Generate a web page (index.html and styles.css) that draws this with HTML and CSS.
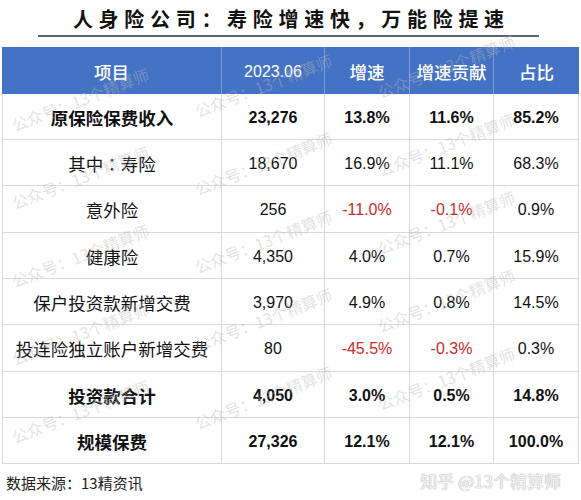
FILE: index.html
```html
<!DOCTYPE html>
<html lang="zh-CN">
<head>
<meta charset="utf-8">
<title>人身险公司：寿险增速快，万能险提速</title>
<link rel="stylesheet" href="styles.css">
</head>
<body>
<div class="page">
  <h1 class="title">人身险公司<span class="colon">：</span>寿险增速快，万能险提速</h1>

  <div class="sheet">
    <div class="cell head lbl">项目</div>
    <div class="cell head num">2023.06</div>
    <div class="cell head lbl">增速</div>
    <div class="cell head lbl">增速贡献</div>
    <div class="cell head lbl">占比</div>

    <div class="cell first lbl bold">原保险保费收入</div>
    <div class="cell num bold">23,276</div>
    <div class="cell num bold">13.8%</div>
    <div class="cell num bold">11.6%</div>
    <div class="cell num bold">85.2%</div>

    <div class="cell first lbl">其中<span class="colon">：</span>寿险</div>
    <div class="cell num">18,670</div>
    <div class="cell num">16.9%</div>
    <div class="cell num">11.1%</div>
    <div class="cell num">68.3%</div>

    <div class="cell first lbl">意外险</div>
    <div class="cell num">256</div>
    <div class="cell num neg">-11.0%</div>
    <div class="cell num neg">-0.1%</div>
    <div class="cell num">0.9%</div>

    <div class="cell first lbl">健康险</div>
    <div class="cell num">4,350</div>
    <div class="cell num">4.0%</div>
    <div class="cell num">0.7%</div>
    <div class="cell num">15.9%</div>

    <div class="cell first lbl">保户投资款新增交费</div>
    <div class="cell num">3,970</div>
    <div class="cell num">4.9%</div>
    <div class="cell num">0.8%</div>
    <div class="cell num">14.5%</div>

    <div class="cell first lbl">投连险独立账户新增交费</div>
    <div class="cell num">80</div>
    <div class="cell num neg">-45.5%</div>
    <div class="cell num neg">-0.3%</div>
    <div class="cell num">0.3%</div>

    <div class="cell first lbl bold">投资款合计</div>
    <div class="cell num bold">4,050</div>
    <div class="cell num bold">3.0%</div>
    <div class="cell num bold">0.5%</div>
    <div class="cell num bold">14.8%</div>

    <div class="cell first lbl bold">规模保费</div>
    <div class="cell num bold">27,326</div>
    <div class="cell num bold">12.1%</div>
    <div class="cell num bold">12.1%</div>
    <div class="cell num bold">100.0%</div>
  </div>

  <footer class="foot">
    <span class="source">数据来源<span class="colon">：</span>13精资讯</span>
    <span class="zhihu">知乎 @13个精算师</span>
  </footer>

  <div class="wm-layer" aria-hidden="true">
    <span class="wm">公众号：13个精算师</span><span class="wm">公众号：13个精算师</span><span class="wm">公众号：13个精算师</span>
    <span class="wm">公众号：13个精算师</span><span class="wm">公众号：13个精算师</span><span class="wm">公众号：13个精算师</span>
    <span class="wm">公众号：13个精算师</span><span class="wm">公众号：13个精算师</span><span class="wm">公众号：13个精算师</span>
    <span class="wm">公众号：13个精算师</span><span class="wm">公众号：13个精算师</span><span class="wm">公众号：13个精算师</span>
    <span class="wm">公众号：13个精算师</span><span class="wm">公众号：13个精算师</span><span class="wm">公众号：13个精算师</span>
  </div>
</div>
</body>
</html>
```

FILE: styles.css
```css
html, body {
  margin: 0;
  padding: 0;
  background: #ffffff;
}

.page {
  position: relative;
  width: 581px;
  height: 500px;
  overflow: hidden;
  background: #ffffff;
  font-family: "Liberation Sans", "Noto Sans CJK SC", sans-serif;
  color: #111111;
}

/* centred full-width colon, as in the source chart font */
.colon {
  font-family: "Noto Sans CJK JP", "Noto Sans CJK SC", sans-serif;
}

/* ---------- title ---------- */
.title {
  margin: 0 0 10px 38px;
  width: 501px;
  box-sizing: border-box;
  padding: 3px 0 0 5.7px;
  height: 37px;
  line-height: 32px;
  border-bottom: 2px solid #566579;
  text-align: center;
  font-family: "Noto Sans CJK SC", sans-serif;
  font-size: 20px;
  font-weight: 700;
  letter-spacing: 5.7px;
  color: #111111;
}

/* ---------- table ---------- */
.sheet {
  margin-left: 2px;
  width: 577px;
  display: grid;
  grid-template-columns: 220px 103px 85px 84px 85px;
  grid-template-rows: 47px 46px 46px 47px 46px 46px 47px 46px 46px;
}

.cell {
  box-sizing: border-box;
  display: flex;
  align-items: center;
  justify-content: center;
  border-right: 1px solid #d9d9d9;
  border-bottom: 1px solid #d9d9d9;
  color: #111111;
  white-space: nowrap;
}

.cell.first {
  border-left: 1px solid #d9d9d9;
}

.cell.lbl {
  font-family: "Noto Sans CJK SC", sans-serif;
  font-size: 17.5px;
  padding-top: 1px;
}

.cell.num {
  font-family: "Liberation Sans", "Noto Sans CJK SC", sans-serif;
  font-size: 16px;
  padding-top: 2px;
}

.cell.bold {
  font-weight: 700;
}

.cell.neg {
  color: #cc2b2b;
}

.cell.head {
  background: #4472c4;
  color: #ffffff;
  font-weight: 500;
  border-right: 1px solid #7e9dd6;
  border-bottom: none;
}

.cell.head:nth-child(5) {
  border-right: none;
}

/* ---------- footer ---------- */
.foot {
  height: 36px;
  display: flex;
  align-items: center;
  justify-content: space-between;
  padding: 0 20px 0 6px;
}

.source {
  font-family: "Noto Sans CJK SC", sans-serif;
  font-size: 15px;
  color: #222222;
}

.zhihu {
  font-family: "Noto Sans CJK SC", sans-serif;
  font-size: 17px;
  color: #f4f4f4;
  text-shadow: 0 0 1px #b0b0b0, 0 0 1px #b0b0b0;
  margin-top: -4px;
}

/* ---------- watermark overlay ---------- */
.wm-layer {
  position: absolute;
  top: 55px;
  left: 15px;
  width: 549px;
  display: grid;
  grid-template-columns: repeat(3, 183px);
  grid-auto-rows: 78px;
  pointer-events: none;
}

.wm {
  align-self: end;
  justify-self: start;
  height: 16px;
  line-height: 16px;
  white-space: nowrap;
  font-family: "Noto Sans CJK SC", sans-serif;
  font-size: 16px;
  color: rgba(185, 185, 185, 0.42);
  transform-origin: 0 100%;
  transform: rotate(-21deg);
}

.wm:nth-child(3n+2) {
  transform: translateY(-14px) rotate(-21deg);
}

.wm:nth-child(3n) {
  transform: translateY(-33px) rotate(-21deg);
}
```
